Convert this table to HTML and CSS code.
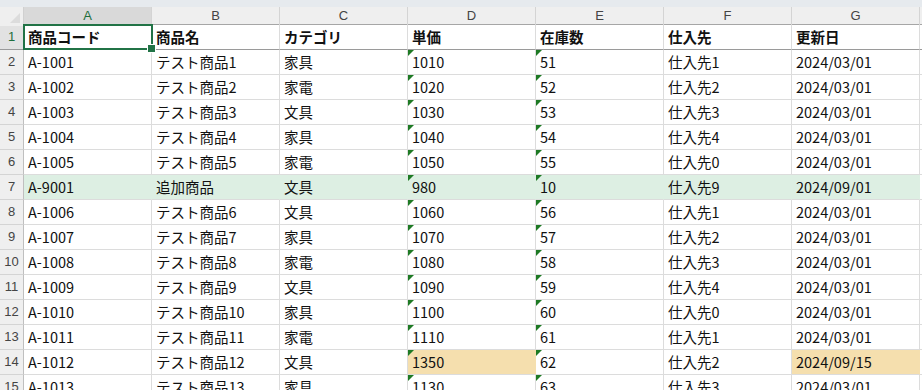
FILE: index.html
```html
<!DOCTYPE html>
<html lang="ja">
<head>
<meta charset="utf-8">
<link rel="stylesheet" href="styles.css">
</head>
<body>
<div class="sheet">
  <div class="topbar"></div>
  <div class="colhead">
    <div class="corner"><span class="corner-tri"></span></div>
    <div class="ch sel">A</div><div class="ch">B</div><div class="ch">C</div><div class="ch">D</div><div class="ch">E</div><div class="ch">F</div><div class="ch">G</div><div class="ch end"></div>
  </div>

  <div class="row head frz"><div class="rh sel">1</div><div class="c active">商品コード</div><div class="c">商品名</div><div class="c">カテゴリ</div><div class="c">単価</div><div class="c">在庫数</div><div class="c">仕入先</div><div class="c">更新日</div><div class="pad"></div></div>
  <div class="row"><div class="rh">2</div><div class="c">A-1001</div><div class="c">テスト商品1</div><div class="c">家具</div><div class="c tn">1010</div><div class="c tn">51</div><div class="c">仕入先1</div><div class="c">2024/03/01</div><div class="pad"></div></div>
  <div class="row"><div class="rh">3</div><div class="c">A-1002</div><div class="c">テスト商品2</div><div class="c">家電</div><div class="c tn">1020</div><div class="c tn">52</div><div class="c">仕入先2</div><div class="c">2024/03/01</div><div class="pad"></div></div>
  <div class="row"><div class="rh">4</div><div class="c">A-1003</div><div class="c">テスト商品3</div><div class="c">文具</div><div class="c tn">1030</div><div class="c tn">53</div><div class="c">仕入先3</div><div class="c">2024/03/01</div><div class="pad"></div></div>
  <div class="row"><div class="rh">5</div><div class="c">A-1004</div><div class="c">テスト商品4</div><div class="c">家具</div><div class="c tn">1040</div><div class="c tn">54</div><div class="c">仕入先4</div><div class="c">2024/03/01</div><div class="pad"></div></div>
  <div class="row"><div class="rh">6</div><div class="c">A-1005</div><div class="c">テスト商品5</div><div class="c">家電</div><div class="c tn">1050</div><div class="c tn">55</div><div class="c">仕入先0</div><div class="c">2024/03/01</div><div class="pad"></div></div>
  <div class="row green"><div class="rh">7</div><div class="c">A-9001</div><div class="c">追加商品</div><div class="c">文具</div><div class="c tn">980</div><div class="c tn">10</div><div class="c">仕入先9</div><div class="c">2024/09/01</div><div class="pad"></div></div>
  <div class="row"><div class="rh">8</div><div class="c">A-1006</div><div class="c">テスト商品6</div><div class="c">文具</div><div class="c tn">1060</div><div class="c tn">56</div><div class="c">仕入先1</div><div class="c">2024/03/01</div><div class="pad"></div></div>
  <div class="row"><div class="rh">9</div><div class="c">A-1007</div><div class="c">テスト商品7</div><div class="c">家具</div><div class="c tn">1070</div><div class="c tn">57</div><div class="c">仕入先2</div><div class="c">2024/03/01</div><div class="pad"></div></div>
  <div class="row"><div class="rh">10</div><div class="c">A-1008</div><div class="c">テスト商品8</div><div class="c">家電</div><div class="c tn">1080</div><div class="c tn">58</div><div class="c">仕入先3</div><div class="c">2024/03/01</div><div class="pad"></div></div>
  <div class="row"><div class="rh">11</div><div class="c">A-1009</div><div class="c">テスト商品9</div><div class="c">文具</div><div class="c tn">1090</div><div class="c tn">59</div><div class="c">仕入先4</div><div class="c">2024/03/01</div><div class="pad"></div></div>
  <div class="row"><div class="rh">12</div><div class="c">A-1010</div><div class="c">テスト商品10</div><div class="c">家具</div><div class="c tn">1100</div><div class="c tn">60</div><div class="c">仕入先0</div><div class="c">2024/03/01</div><div class="pad"></div></div>
  <div class="row"><div class="rh">13</div><div class="c">A-1011</div><div class="c">テスト商品11</div><div class="c">家電</div><div class="c tn">1110</div><div class="c tn">61</div><div class="c">仕入先1</div><div class="c">2024/03/01</div><div class="pad"></div></div>
  <div class="row"><div class="rh">14</div><div class="c">A-1012</div><div class="c">テスト商品12</div><div class="c">文具</div><div class="c tn tan">1350</div><div class="c tn">62</div><div class="c">仕入先2</div><div class="c tan">2024/09/15</div><div class="pad"></div></div>
  <div class="row"><div class="rh">15</div><div class="c">A-1013</div><div class="c">テスト商品13</div><div class="c">家具</div><div class="c tn">1130</div><div class="c tn">63</div><div class="c">仕入先3</div><div class="c">2024/03/01</div><div class="pad"></div></div>
</div>
</body>
</html>
```

FILE: styles.css
```css
* { box-sizing: border-box; }
html, body { margin: 0; padding: 0; background: #ffffff; }
body { overflow: hidden; }

.sheet {
  width: 922px;
  font-family: "Noto Sans CJK JP", "Noto Sans", sans-serif;
  color: #111;
}

.topbar {
  height: 7px;
  background: #e6eaee;
}

.colhead {
  display: grid;
  grid-template-columns: 24px repeat(7, 128px) 2px;
  height: 18px;
  background: #efefef;
  border-bottom: 1px solid #a6a6a6;
}
.corner {
  position: relative;
  border-right: 1px solid #d0d0d0;
  background: #efefef;
}
.corner-tri {
  position: absolute;
  right: 3px;
  bottom: 3px;
  width: 0;
  height: 0;
  border-left: 10px solid transparent;
  border-bottom: 10px solid #dcdcdc;
}
.ch {
  border-right: 1px solid #d4d4d4;
  font-family: "Liberation Sans", "DejaVu Sans", sans-serif;
  font-size: 13px;
  color: #444;
  text-align: center;
  line-height: 17px;
}
.ch.sel {
  background: #d9d9d9;
  color: #1e6e3c;
  border-bottom: 2px solid #217346;
}
.ch.end { border-right: none; }

.row {
  display: grid;
  grid-template-columns: 24px repeat(7, 128px) 2px;
  height: 25px;
}
.rh {
  background: #efefef;
  border-right: 1px solid #bfbfbf;
  border-bottom: 1px solid #d4d4d4;
  font-family: "Liberation Sans", "DejaVu Sans", sans-serif;
  font-size: 13px;
  color: #444;
  text-align: center;
  line-height: 24px;
}
.rh.sel { color: #1e6e3c; background: #e2e2e2; }

.c {
  position: relative;
  border-right: 1px solid #dcdcdc;
  border-bottom: 1px solid #dcdcdc;
  padding: 0 4px;
  font-size: 14.5px;
  line-height: 24px;
  white-space: nowrap;
  overflow: visible;
}
.pad {
  border-bottom: 1px solid #dcdcdc;
}

.head .c { font-weight: 700; }
.frz .c, .frz .pad, .frz .rh { border-bottom: 1px solid #9a9a9a; }

.green .c { background: #ddefe3; border-right-color: #ddefe3; }
.green .c:last-of-type { border-right-color: #dcdcdc; }
.c.tan { background: #f5dfae; border-right-color: #f5dfae; }

.tn::before {
  content: "";
  position: absolute;
  left: 0;
  top: 0;
  width: 0;
  height: 0;
  border-top: 6px solid #1e7a24;
  border-right: 6px solid transparent;
}

.active::after {
  content: "";
  position: absolute;
  left: -1px;
  top: -1px;
  right: -2px;
  bottom: -1px;
  border: 2px solid #217346;
  pointer-events: none;
}
.active::before {
  content: "";
  position: absolute;
  right: -5px;
  bottom: -4px;
  width: 7px;
  height: 7px;
  background: #217346;
  border: 1px solid #ffffff;
  z-index: 2;
}
```
